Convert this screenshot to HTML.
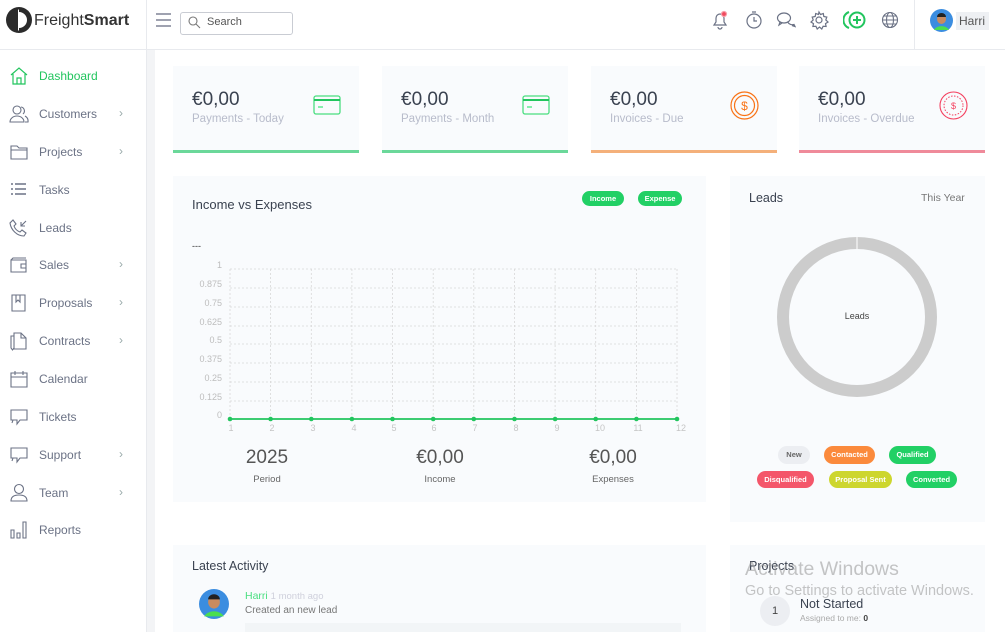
<!DOCTYPE html>
<html><head><meta charset="utf-8"><style>
*{box-sizing:border-box;margin:0;padding:0}
body{width:1005px;height:632px;overflow:hidden;background:#fff;font-family:"Liberation Sans",sans-serif;color:#555;position:relative}
.abs{position:absolute}
.hdr{left:0;top:0;width:1005px;height:50px;border-bottom:1px solid #e8eaee;background:#fff}
.side{left:0;top:50px;width:147px;height:582px;border-right:1px solid #e8eaee;background:#fff}
.strip{left:147px;top:50px;width:8px;height:582px;background:#f3f4f6}
.nav{position:absolute;left:0;height:20px;width:146px;font-size:12px;color:#6b7285}
.nav svg{position:absolute;left:9px;top:0}
.nav span{position:absolute;left:39px;top:3px}
.nav i{position:absolute;left:119px;top:2px;font-style:normal;color:#9aa;font-size:12px}
.card{background:#f9fbfd}
.amt{font-size:19px;color:#3a4250}
.lbl{font-size:11.5px;color:#b8bccb}
.pill{position:absolute;border-radius:9px;color:#fff;font-size:7.5px;font-weight:bold;text-align:center;line-height:15px;height:15px}
</style></head><body>
<div class="abs hdr"></div>
<svg class="abs" style="left:5px;top:6px" width="28" height="28" viewBox="0 0 28 28"><circle cx="14" cy="14" r="13" fill="#2b2b2b"/><path d="M13 3.5 A10.5 10.5 0 0 1 13 24.5 Z" fill="#fff"/><path d="M14 3 A11 11 0 0 1 14 25 L14 22 A8 8 0 0 0 14 6 Z" fill="#2b2b2b"/></svg>
<div class="abs" style="left:34px;top:12px;font-size:16px;color:#333">Freight<b>Smart</b></div>
<div class="abs" style="left:146px;top:0;width:1px;height:50px;background:#e8eaee"></div>
<svg class="abs" style="left:156px;top:13px" width="16" height="14"><path d="M0 1h15M0 7h15M0 13h15" stroke="#666a80" stroke-width="1.3"/></svg>
<div class="abs" style="left:180px;top:12px;width:113px;height:23px;border:1px solid #c9ccd3;border-radius:3px"></div>
<svg class="abs" style="left:188px;top:16px" width="13" height="13"><circle cx="5" cy="5" r="4" fill="none" stroke="#777" stroke-width="1.1"/><path d="M8 8l4 4" stroke="#777" stroke-width="1.1"/></svg>
<div class="abs" style="left:207px;top:16px;font-size:11px;color:#555">Search</div>
<svg class="abs" style="left:710px;top:10px" width="20" height="20" viewBox="0 0 20 20" fill="none" stroke="#6b7285" stroke-width="1.2"><path d="M4 15h12l-2-3V8a4 4 0 0 0-8 0v4z"/><path d="M8 17a2 2 0 0 0 4 0"/><circle cx="14" cy="4" r="2.5" fill="#f04a5e" stroke="#f7a0aa"/></svg>
<svg class="abs" style="left:744px;top:10px" width="20" height="20" viewBox="0 0 20 20" fill="none" stroke="#6b7285" stroke-width="1.2"><circle cx="10" cy="11" r="7"/><path d="M10 7v4h3M8 2h4"/></svg>
<svg class="abs" style="left:776px;top:10px" width="20" height="20" viewBox="0 0 20 20" fill="none" stroke="#6b7285" stroke-width="1.2"><ellipse cx="8" cy="8" rx="6.5" ry="5"/><path d="M4 12l-1 3 3-2M12 12.5a5 4 0 0 0 6 2l1 2-3-1"/></svg>
<svg class="abs" style="left:809px;top:10px" width="20" height="20" viewBox="0 0 20 20" fill="none" stroke="#6b7285" stroke-width="1.2"><circle cx="10" cy="10" r="3"/><path d="M10 2l1.5 2.5 2.8-1 .5 3 3 .6-1 2.9 2.2 2-2.5 1.6.6 2.9-3-.2-1.3 2.7-2.3-2-2.3 2-1.3-2.7-3 .2.6-2.9L2 12l2.2-2-1-2.9 3-.6.5-3 2.8 1z"/></svg>
<svg class="abs" style="left:843px;top:9px" width="24" height="22" viewBox="0 0 24 22" fill="none" stroke="#22c55e" stroke-width="2"><path d="M6 3a8.5 8.5 0 0 0 0 16"/><circle cx="14" cy="11" r="7.5"/><path d="M14 7v8M10 11h8"/></svg>
<svg class="abs" style="left:880px;top:10px" width="20" height="20" viewBox="0 0 20 20" fill="none" stroke="#6b7285" stroke-width="1.1"><circle cx="10" cy="10" r="7.5"/><ellipse cx="10" cy="10" rx="3.5" ry="7.5"/><path d="M2.5 10h15M4 6h12M4 14h12"/></svg>
<div class="abs" style="left:914px;top:0;width:1px;height:50px;background:#e8eaee"></div>
<svg class="abs" style="left:930px;top:9px" width="23" height="23" viewBox="0 0 23 23"><circle cx="11.5" cy="11.5" r="11.5" fill="#3b8de0"/><path d="M4 21a8 6 0 0 1 15 0z" fill="#4ade50"/><ellipse cx="11.5" cy="10" rx="4.5" ry="5" fill="#c98b5f"/><path d="M7 8a4.5 4 0 0 1 9 0z" fill="#222"/></svg>
<div class="abs" style="left:956px;top:12px;width:33px;height:18px;background:#eef0f3;font-size:12px;color:#555;padding:2px 3px">Harri</div>

<div class="abs side"></div>
<div class="abs strip"></div>
<div class="nav" style="top:66px;color:#22c55e"><svg width="20" height="20" fill="none" stroke="#22c55e" stroke-width="1.2"><path d="M2 9L10 2l8 7M4 8v10h12V8M8 18v-6h4v6"/></svg><span>Dashboard</span></div>
<div class="nav" style="top:104px"><svg width="20" height="20" fill="none" stroke="#6b7285" stroke-width="1.1"><circle cx="8" cy="6" r="4"/><path d="M1 18a7 6 0 0 1 14 0zM12 3a4 4 0 0 1 2 7M16 18h3a6 6 0 0 0-3-6"/></svg><span>Customers</span><i>›</i></div>
<div class="nav" style="top:142px"><svg width="20" height="20" fill="none" stroke="#6b7285" stroke-width="1.1"><path d="M2 4h6l2 2h8v11H2zM2 8h16"/></svg><span>Projects</span><i>›</i></div>
<div class="nav" style="top:180px"><svg width="20" height="20" fill="none" stroke="#6b7285" stroke-width="1.4"><path d="M2 4h2M2 9h2M2 14h2M6 4h11M6 9h11M6 14h11"/></svg><span>Tasks</span></div>
<div class="nav" style="top:218px"><svg width="20" height="20" fill="none" stroke="#6b7285" stroke-width="1.1"><path d="M4 2l3 4-2 2a10 10 0 0 0 6 6l2-2 4 3-2 3C8 18 2 12 1 5zM12 8l5-5M12 4v4h4"/></svg><span>Leads</span></div>
<div class="nav" style="top:255px"><svg width="20" height="20" fill="none" stroke="#6b7285" stroke-width="1.1"><path d="M2 5h15v12H2zM2 5l2-2h13M12 9h5v4h-5z"/></svg><span>Sales</span><i>›</i></div>
<div class="nav" style="top:293px"><svg width="20" height="20" fill="none" stroke="#6b7285" stroke-width="1.1"><path d="M3 2h13v16H3zM7 2v7l2-2 2 2V2"/></svg><span>Proposals</span><i>›</i></div>
<div class="nav" style="top:331px"><svg width="20" height="20" fill="none" stroke="#6b7285" stroke-width="1.1"><path d="M5 2h7l5 5v11H5zM12 2v5h5M2 5h3v12l-1.5 2L2 17z"/></svg><span>Contracts</span><i>›</i></div>
<div class="nav" style="top:369px"><svg width="20" height="20" fill="none" stroke="#6b7285" stroke-width="1.1"><path d="M2 4h16v14H2zM2 8h16M6 2v4M14 2v4"/></svg><span>Calendar</span></div>
<div class="nav" style="top:407px"><svg width="20" height="20" fill="none" stroke="#6b7285" stroke-width="1.1"><path d="M2 3h16v10h-7l-3 4v-4H2zM4 13l-1 3"/></svg><span>Tickets</span></div>
<div class="nav" style="top:445px"><svg width="20" height="20" fill="none" stroke="#6b7285" stroke-width="1.1"><path d="M2 3h16v10h-7l-3 4v-4H2zM4 13l-1 3"/></svg><span>Support</span><i>›</i></div>
<div class="nav" style="top:483px"><svg width="20" height="20" fill="none" stroke="#6b7285" stroke-width="1.1"><circle cx="10" cy="6" r="4.5"/><path d="M2 18c0-5 4-6 8-6s8 1 8 6z"/></svg><span>Team</span><i>›</i></div>
<div class="nav" style="top:520px"><svg width="20" height="20" fill="none" stroke="#6b7285" stroke-width="1.1"><path d="M2 10h3v8H2zM8 13h3v5H8zM14 2h3v16h-3z"/></svg><span>Reports</span></div>

<div class="abs card" style="left:173px;top:66px;width:186px;height:87px;border-bottom:3px solid #6bd89a"></div>
<div class="abs card" style="left:382px;top:66px;width:186px;height:87px;border-bottom:3px solid #6bd89a"></div>
<div class="abs card" style="left:591px;top:66px;width:186px;height:87px;border-bottom:3px solid #f4b07a"></div>
<div class="abs card" style="left:799px;top:66px;width:186px;height:87px;border-bottom:3px solid #ef8a9a"></div>
<div class="abs amt" style="left:192px;top:89px">€0,00</div><div class="abs lbl" style="left:192px;top:113px">Payments - Today</div>
<div class="abs amt" style="left:401px;top:89px">€0,00</div><div class="abs lbl" style="left:401px;top:113px">Payments - Month</div>
<div class="abs amt" style="left:610px;top:89px">€0,00</div><div class="abs lbl" style="left:610px;top:113px">Invoices - Due</div>
<div class="abs amt" style="left:818px;top:89px">€0,00</div><div class="abs lbl" style="left:818px;top:113px">Invoices - Overdue</div>
<svg class="abs" style="left:313px;top:95px" width="29" height="21"><rect x="1" y="1" width="26" height="18" rx="2" fill="none" stroke="#4ade80" stroke-width="1.3"/><path d="M1 5h26" stroke="#22c55e" stroke-width="2"/><path d="M5 12h5" stroke="#86efac" stroke-width="2"/></svg>
<svg class="abs" style="left:522px;top:95px" width="29" height="21"><rect x="1" y="1" width="26" height="18" rx="2" fill="none" stroke="#4ade80" stroke-width="1.3"/><path d="M1 5h26" stroke="#22c55e" stroke-width="2"/><path d="M5 12h5" stroke="#86efac" stroke-width="2"/></svg>
<svg class="abs" style="left:730px;top:91px" width="29" height="29"><circle cx="14.5" cy="14.5" r="13.5" fill="none" stroke="#f97316" stroke-width="1.2"/><circle cx="14.5" cy="14.5" r="10" fill="none" stroke="#f97316" stroke-width="1.2"/><text x="14.5" y="19" font-size="12" text-anchor="middle" fill="#f97316" font-family="Liberation Sans">$</text></svg>
<svg class="abs" style="left:939px;top:91px" width="29" height="29"><circle cx="14.5" cy="14.5" r="13.5" fill="none" stroke="#f43f5e" stroke-width="1.1"/><circle cx="14.5" cy="14.5" r="9.5" fill="none" stroke="#f43f5e" stroke-width="1" stroke-dasharray="1.5 1.5"/><text x="14.5" y="18" font-size="9" text-anchor="middle" fill="#f43f5e" font-family="Liberation Sans">$</text></svg>

<div class="abs card" style="left:173px;top:176px;width:533px;height:326px"></div>
<div class="abs" style="left:192px;top:197px;font-size:13px;color:#3a4250">Income vs Expenses</div>
<div class="pill" style="left:582px;top:191px;width:42px;background:#22d065">Income</div>
<div class="pill" style="left:638px;top:191px;width:44px;background:#22d065">Expense</div>
<div class="abs" style="left:192px;top:241px;font-size:9px;color:#333">---</div>
<svg class="abs" style="left:0;top:0" width="1005" height="632">
<g stroke="#d8d8d8" stroke-width="0.8" stroke-dasharray="2 2" fill="none">
<path d="M230 269H677M230 288H677M230 307H677M230 326H677M230 344H677M230 363H677M230 382H677M230 401H677"/>
<path d="M230 269V419M270.6 269V419M311.3 269V419M351.9 269V419M392.5 269V419M433.2 269V419M473.8 269V419M514.5 269V419M555.1 269V419M595.7 269V419M636.4 269V419M677 269V419"/>
</g>
<path d="M230 419H677" stroke="#22c55e" stroke-width="1.8"/>
<g fill="#22c55e"><circle cx="230" cy="419" r="2.3"/><circle cx="270.6" cy="419" r="2.3"/><circle cx="311.3" cy="419" r="2.3"/><circle cx="351.9" cy="419" r="2.3"/><circle cx="392.5" cy="419" r="2.3"/><circle cx="433.2" cy="419" r="2.3"/><circle cx="473.8" cy="419" r="2.3"/><circle cx="514.5" cy="419" r="2.3"/><circle cx="555.1" cy="419" r="2.3"/><circle cx="595.7" cy="419" r="2.3"/><circle cx="636.4" cy="419" r="2.3"/><circle cx="677" cy="419" r="2.3"/></g>
<g font-family="Liberation Sans" font-size="9" fill="#bdbdbd" text-anchor="end">
<text x="222" y="268">1</text><text x="222" y="287">0.875</text><text x="222" y="306">0.75</text><text x="222" y="325">0.625</text><text x="222" y="343">0.5</text><text x="222" y="362">0.375</text><text x="222" y="381">0.25</text><text x="222" y="400">0.125</text><text x="222" y="418">0</text>
</g>
<g font-family="Liberation Sans" font-size="9" fill="#c5c5c5" text-anchor="middle">
<text x="231" y="431">1</text><text x="272" y="431">2</text><text x="313" y="431">3</text><text x="354" y="431">4</text><text x="394" y="431">5</text><text x="434" y="431">6</text><text x="475" y="431">7</text><text x="516" y="431">8</text><text x="557" y="431">9</text><text x="600" y="431">10</text><text x="638" y="431">11</text><text x="681" y="431">12</text>
</g>
</svg>
<div class="abs" style="left:227px;top:447px;width:80px;text-align:center;font-size:19px;color:#555">2025</div>
<div class="abs" style="left:227px;top:474px;width:80px;text-align:center;font-size:9.5px;color:#666">Period</div>
<div class="abs" style="left:400px;top:447px;width:80px;text-align:center;font-size:19px;color:#555">€0,00</div>
<div class="abs" style="left:400px;top:474px;width:80px;text-align:center;font-size:9.5px;color:#666">Income</div>
<div class="abs" style="left:573px;top:447px;width:80px;text-align:center;font-size:19px;color:#555">€0,00</div>
<div class="abs" style="left:573px;top:474px;width:80px;text-align:center;font-size:9.5px;color:#666">Expenses</div>

<div class="abs card" style="left:730px;top:176px;width:255px;height:346px"></div>
<div class="abs" style="left:749px;top:191px;font-size:12.5px;color:#3a4250">Leads</div>
<div class="abs" style="left:921px;top:192px;font-size:10.5px;color:#777">This Year</div>
<svg class="abs" style="left:777px;top:237px" width="160" height="160"><circle cx="80" cy="80" r="74" fill="none" stroke="#cccccc" stroke-width="12"/><path d="M80 0v12" stroke="#fff" stroke-width="1"/></svg>
<div class="abs" style="left:827px;top:311px;width:60px;text-align:center;font-size:9px;color:#444">Leads</div>
<div class="pill" style="left:778px;top:446px;width:32px;height:18px;line-height:18px;background:#eceef2;color:#666">New</div>
<div class="pill" style="left:824px;top:446px;width:51px;height:18px;line-height:18px;background:#fb8a3c">Contacted</div>
<div class="pill" style="left:889px;top:446px;width:47px;height:18px;line-height:18px;background:#22d065">Qualified</div>
<div class="pill" style="left:757px;top:471px;width:57px;height:17px;line-height:17px;background:#f4566a">Disqualified</div>
<div class="pill" style="left:829px;top:471px;width:63px;height:17px;line-height:17px;background:#cdd62e">Proposal Sent</div>
<div class="pill" style="left:906px;top:471px;width:51px;height:17px;line-height:17px;background:#22d065">Converted</div>

<div class="abs card" style="left:173px;top:545px;width:533px;height:87px"></div>
<div class="abs" style="left:192px;top:559px;font-size:12.5px;color:#3a4250">Latest Activity</div>
<svg class="abs" style="left:199px;top:589px" width="30" height="30" viewBox="0 0 23 23"><circle cx="11.5" cy="11.5" r="11.5" fill="#3b8de0"/><path d="M4 21a8 6 0 0 1 15 0z" fill="#4ade50"/><ellipse cx="11.5" cy="10" rx="4.5" ry="5" fill="#c98b5f"/><path d="M7 8a4.5 4 0 0 1 9 0z" fill="#222"/></svg>
<div class="abs" style="left:245px;top:590px;font-size:10.5px;color:#4ade80">Harri <span style="color:#cfd0dc;font-size:9.5px">1 month ago</span></div>
<div class="abs" style="left:245px;top:605px;font-size:10px;color:#777">Created an new lead</div>
<div class="abs" style="left:245px;top:623px;width:436px;height:9px;background:#f2f5f7"></div>

<div class="abs card" style="left:730px;top:545px;width:255px;height:87px"></div>
<div class="abs" style="left:749px;top:559px;font-size:12.5px;color:#3a4250">Projects</div>
<div class="abs" style="left:745px;top:558px;font-size:19.5px;color:rgba(150,150,150,.55)">Activate Windows</div>
<div class="abs" style="left:745px;top:583px;font-size:14.5px;color:rgba(150,150,150,.55)">Go to Settings to activate Windows.</div>
<div class="abs" style="left:760px;top:596px;width:30px;height:30px;border-radius:50%;background:#eceef2;text-align:center;line-height:30px;font-size:11px;color:#444">1</div>
<div class="abs" style="left:800px;top:597px;font-size:12.5px;color:#3a4250">Not Started</div>
<div class="abs" style="left:800px;top:613px;font-size:8.5px;color:#aaa">Assigned to me: <b style="color:#444">0</b></div>
</body></html>
